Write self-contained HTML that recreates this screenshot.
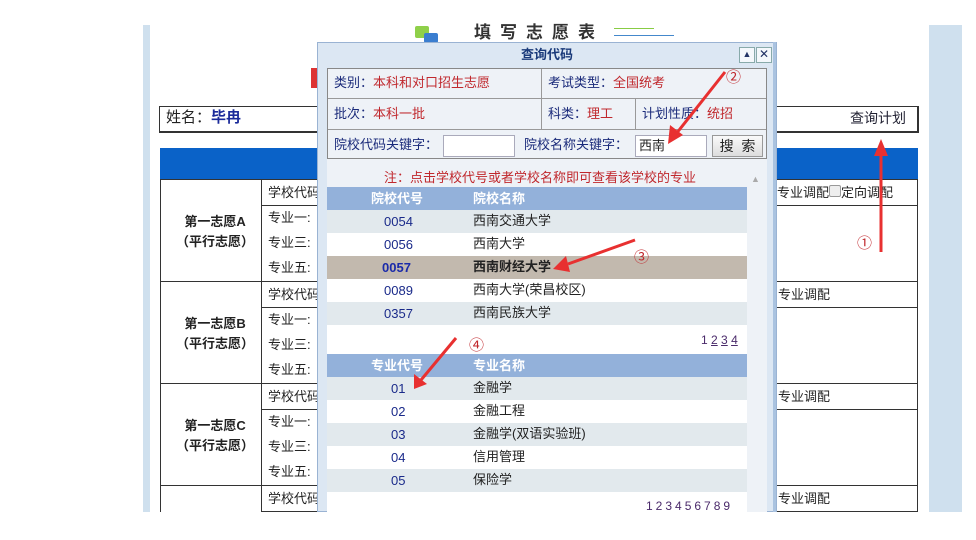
<!DOCTYPE html>
<html><head><meta charset="utf-8"><style>
body{margin:0;width:976px;height:540px;background:#fff;position:relative;overflow:hidden;font-family:"Liberation Sans","Noto Sans CJK SC","WenQuanYi Zen Hei",sans-serif;font-size:13px;color:#222}
.a{position:absolute}
.t{position:absolute;white-space:nowrap;line-height:16px}
.b{border:1px solid #333;box-sizing:border-box;position:absolute}
.lab{color:#1a2a7a}.red{color:#c0282d}
</style></head><body>
<div class="a" style="left:143px;top:25px;width:7px;height:487px;background:#cfe0ee"></div>
<div class="a" style="left:929px;top:25px;width:33px;height:487px;background:#cfe0ee"></div>

<div class="a" style="left:415px;top:26px;width:14px;height:12px;background:#8fd04a;border-radius:2px"></div>
<div class="a" style="left:424px;top:33px;width:14px;height:10px;background:#3a7ed0;border-radius:2px"></div>
<div class="t" style="left:474px;top:25px;font-size:17px;font-weight:bold;letter-spacing:9px;color:#333">填写志愿表</div>
<div class="a" style="left:614px;top:28px;width:40px;height:1px;background:#8c4"></div>
<div class="a" style="left:614px;top:35px;width:60px;height:1px;background:#48c"></div>
<div class="a" style="left:311px;top:68px;width:8px;height:20px;background:#d33"></div>

<div class="b" style="left:159px;top:106px;width:760px;height:27px;border-width:1px 2px 2px 1px"></div>
<div class="t" style="left:166px;top:110px;font-size:15px">姓名：<b style="color:#1a2a9a">毕冉</b></div>
<div class="t" style="left:850px;top:110px;font-size:14px;color:#223">查询计划</div>

<div class="a" style="left:160px;top:148px;width:758px;height:32px;background:#0a62c8"></div>
<div class="b" style="left:160px;top:179px;width:758px;height:340px"></div>
<div class="a" style="left:261px;top:179px;width:1px;height:340px;background:#333"></div>
<div class="a" style="left:160px;top:281px;width:758px;height:1px;background:#333"></div>
<div class="a" style="left:160px;top:383px;width:758px;height:1px;background:#333"></div>
<div class="a" style="left:160px;top:485px;width:758px;height:1px;background:#333"></div>
<div class="a" style="left:262px;top:205px;width:656px;height:1px;background:#333"></div>
<div class="a" style="left:262px;top:307px;width:656px;height:1px;background:#333"></div>
<div class="a" style="left:262px;top:409px;width:656px;height:1px;background:#333"></div>
<div class="a" style="left:262px;top:511px;width:656px;height:1px;background:#333"></div>

<div class="t" style="left:268px;top:185px">学校代码</div>
<div class="t" style="left:268px;top:210px">专业一:</div>
<div class="t" style="left:268px;top:235px">专业三:</div>
<div class="t" style="left:268px;top:260px">专业五:</div>
<div class="t" style="left:268px;top:287px">学校代码</div>
<div class="t" style="left:268px;top:312px">专业一:</div>
<div class="t" style="left:268px;top:337px">专业三:</div>
<div class="t" style="left:268px;top:362px">专业五:</div>
<div class="t" style="left:268px;top:389px">学校代码</div>
<div class="t" style="left:268px;top:414px">专业一:</div>
<div class="t" style="left:268px;top:439px">专业三:</div>
<div class="t" style="left:268px;top:464px">专业五:</div>
<div class="t" style="left:268px;top:491px">学校代码</div>
<div class="t" style="left:176px;top:212px;font-weight:bold;line-height:20px;text-align:center">第一志愿A<br>（平行志愿）</div>
<div class="t" style="left:176px;top:314px;font-weight:bold;line-height:20px;text-align:center">第一志愿B<br>（平行志愿）</div>
<div class="t" style="left:176px;top:416px;font-weight:bold;line-height:20px;text-align:center">第一志愿C<br>（平行志愿）</div>
<div class="t" style="left:777px;top:185px">专业调配<span style="display:inline-block;width:10px;height:10px;border:1px solid #999;background:#eee;border-radius:2px"></span>定向调配</div>
<div class="t" style="left:778px;top:287px">专业调配</div>
<div class="t" style="left:778px;top:389px">专业调配</div>
<div class="t" style="left:778px;top:491px">专业调配</div>

<!-- dialog -->
<div class="a" style="left:317px;top:42px;width:460px;height:470px;background:#dce7f3;border:1px solid #9ab3d3;box-sizing:border-box"></div>
<div class="t" style="left:317px;top:47px;width:460px;text-align:center;font-weight:bold;color:#1a3a7a">查询代码</div>
<div class="a" style="left:739px;top:47px;width:14px;height:14px;border:1px solid #8aa;background:#f4f8fc;font-size:9px;text-align:center;line-height:13px;color:#236">▲</div>
<div class="a" style="left:756px;top:47px;width:14px;height:14px;border:1px solid #8aa;background:#f4f8fc;font-size:12px;text-align:center;line-height:13px;color:#236">✕</div>
<div class="a" style="left:327px;top:68px;width:440px;height:444px;background:#eef2f7"></div>
<div class="a" style="left:327px;top:68px;width:440px;height:91px;border:1px solid #888;box-sizing:border-box;background:#eef2f7"></div>
<div class="a" style="left:328px;top:98px;width:438px;height:1px;background:#999"></div>
<div class="a" style="left:328px;top:129px;width:438px;height:1px;background:#999"></div>
<div class="a" style="left:541px;top:69px;width:1px;height:60px;background:#999"></div>
<div class="a" style="left:635px;top:99px;width:1px;height:30px;background:#999"></div>
<div class="t" style="left:334px;top:75px"><span class="lab">类别：</span><span class="red">本科和对口招生志愿</span></div>
<div class="t" style="left:548px;top:75px"><span class="lab">考试类型：</span><span class="red">全国统考</span></div>
<div class="t" style="left:334px;top:106px"><span class="lab">批次：</span><span class="red">本科一批</span></div>
<div class="t" style="left:548px;top:106px"><span class="lab">科类：</span><span class="red">理工</span></div>
<div class="t" style="left:642px;top:106px"><span class="lab">计划性质：</span><span class="red">统招</span></div>
<div class="t lab" style="left:334px;top:137px">院校代码关键字：</div>
<div class="a" style="left:443px;top:135px;width:72px;height:22px;border:1px solid #aab;background:#fff;box-sizing:border-box"></div>
<div class="t lab" style="left:524px;top:137px">院校名称关键字：</div>
<div class="a" style="left:635px;top:135px;width:72px;height:22px;border:1px solid #aab;background:#fff;box-sizing:border-box;padding:2px 3px;line-height:16px">西南</div>
<div class="a" style="left:712px;top:135px;width:51px;height:22px;border:1px solid #999;background:linear-gradient(#fafafa,#ddd);box-sizing:border-box;text-align:center;line-height:20px;white-space:nowrap;font-size:14px">搜&nbsp;&nbsp;索</div>
<div class="t red" style="left:384px;top:170px">注：点击学校代号或者学校名称即可查看该学校的专业</div>
<div class="t" style="left:751px;top:171px;font-size:9px;color:#aaa">▲</div>
<div class="a" style="left:773px;top:42px;width:3px;height:470px;background:#aac3e0"></div>

<div class="a" style="left:327px;top:187px;width:420px;height:325px;background:#fff"></div>
<div class="a" style="left:327px;top:187px;width:420px;height:23px;background:#93b1da"></div>
<div class="a" style="left:327px;top:210px;width:420px;height:23px;background:#e2e9ed"></div>
<div class="a" style="left:327px;top:256px;width:420px;height:23px;background:#c2b9ae"></div>
<div class="a" style="left:327px;top:302px;width:420px;height:23px;background:#e2e9ed"></div>
<div class="a" style="left:327px;top:354px;width:420px;height:23px;background:#93b1da"></div>
<div class="a" style="left:327px;top:377px;width:420px;height:23px;background:#e2e9ed"></div>
<div class="a" style="left:327px;top:423px;width:420px;height:23px;background:#e2e9ed"></div>
<div class="a" style="left:327px;top:469px;width:420px;height:23px;background:#e2e9ed"></div>
<div class="t" style="left:371px;top:191px;color:#fff;font-weight:bold">院校代号</div>
<div class="t" style="left:473px;top:191px;color:#fff;font-weight:bold">院校名称</div>
<div class="t" style="left:384px;top:214px;color:#1a2a8a">0054</div><div class="t" style="left:473px;top:213px">西南交通大学</div>
<div class="t" style="left:384px;top:237px;color:#1a2a8a">0056</div><div class="t" style="left:473px;top:236px">西南大学</div>
<div class="t" style="left:382px;top:260px;color:#1a2aaa;font-weight:bold">0057</div><div class="t" style="left:473px;top:259px;font-weight:bold">西南财经大学</div>
<div class="t" style="left:384px;top:283px;color:#1a2a8a">0089</div><div class="t" style="left:473px;top:282px">西南大学(荣昌校区)</div>
<div class="t" style="left:384px;top:306px;color:#1a2a8a">0357</div><div class="t" style="left:473px;top:305px">西南民族大学</div>
<div class="t" style="left:701px;top:332px;color:#4a2a6a;font-size:12px">1 <u>2</u> <u>3</u> <u>4</u></div>
<div class="t" style="left:371px;top:358px;color:#fff;font-weight:bold">专业代号</div>
<div class="t" style="left:473px;top:358px;color:#fff;font-weight:bold">专业名称</div>
<div class="t" style="left:391px;top:381px;color:#1a2a8a">01</div><div class="t" style="left:473px;top:380px">金融学</div>
<div class="t" style="left:391px;top:404px;color:#1a2a8a">02</div><div class="t" style="left:473px;top:403px">金融工程</div>
<div class="t" style="left:391px;top:427px;color:#1a2a8a">03</div><div class="t" style="left:473px;top:426px">金融学(双语实验班)</div>
<div class="t" style="left:391px;top:450px;color:#1a2a8a">04</div><div class="t" style="left:473px;top:449px">信用管理</div>
<div class="t" style="left:391px;top:473px;color:#1a2a8a">05</div><div class="t" style="left:473px;top:472px">保险学</div>
<div class="t" style="left:646px;top:498px;color:#4a2a6a;font-size:12px;letter-spacing:3px">123456789</div>

<div class="t red" style="left:726px;top:70px;font-size:15px">②</div>
<div class="t red" style="left:634px;top:250px;font-size:15px">③</div>
<div class="t red" style="left:469px;top:338px;font-size:15px">④</div>
<div class="t red" style="left:857px;top:236px;font-size:15px">①</div>
<svg class="a" style="left:0;top:0" width="976" height="540">
<g fill="#e83030" stroke="#e83030">
<line x1="881" y1="252" x2="881" y2="150" stroke-width="3"/><polygon points="874,156 888,156 881,139" stroke="none"/>
<line x1="725" y1="72" x2="676" y2="134" stroke-width="3"/><polygon points="670,125 683,135 668,144" stroke="none"/>
<line x1="635" y1="240" x2="568" y2="264" stroke-width="3"/><polygon points="566,256 570,272 553,269" stroke="none"/>
<line x1="456" y1="338" x2="421" y2="380" stroke-width="3"/><polygon points="414,374 427,384 414,389" stroke="none"/>
</g></svg>
<div class="a" style="left:0;top:512px;width:976px;height:28px;background:#fff"></div>
</body></html>
